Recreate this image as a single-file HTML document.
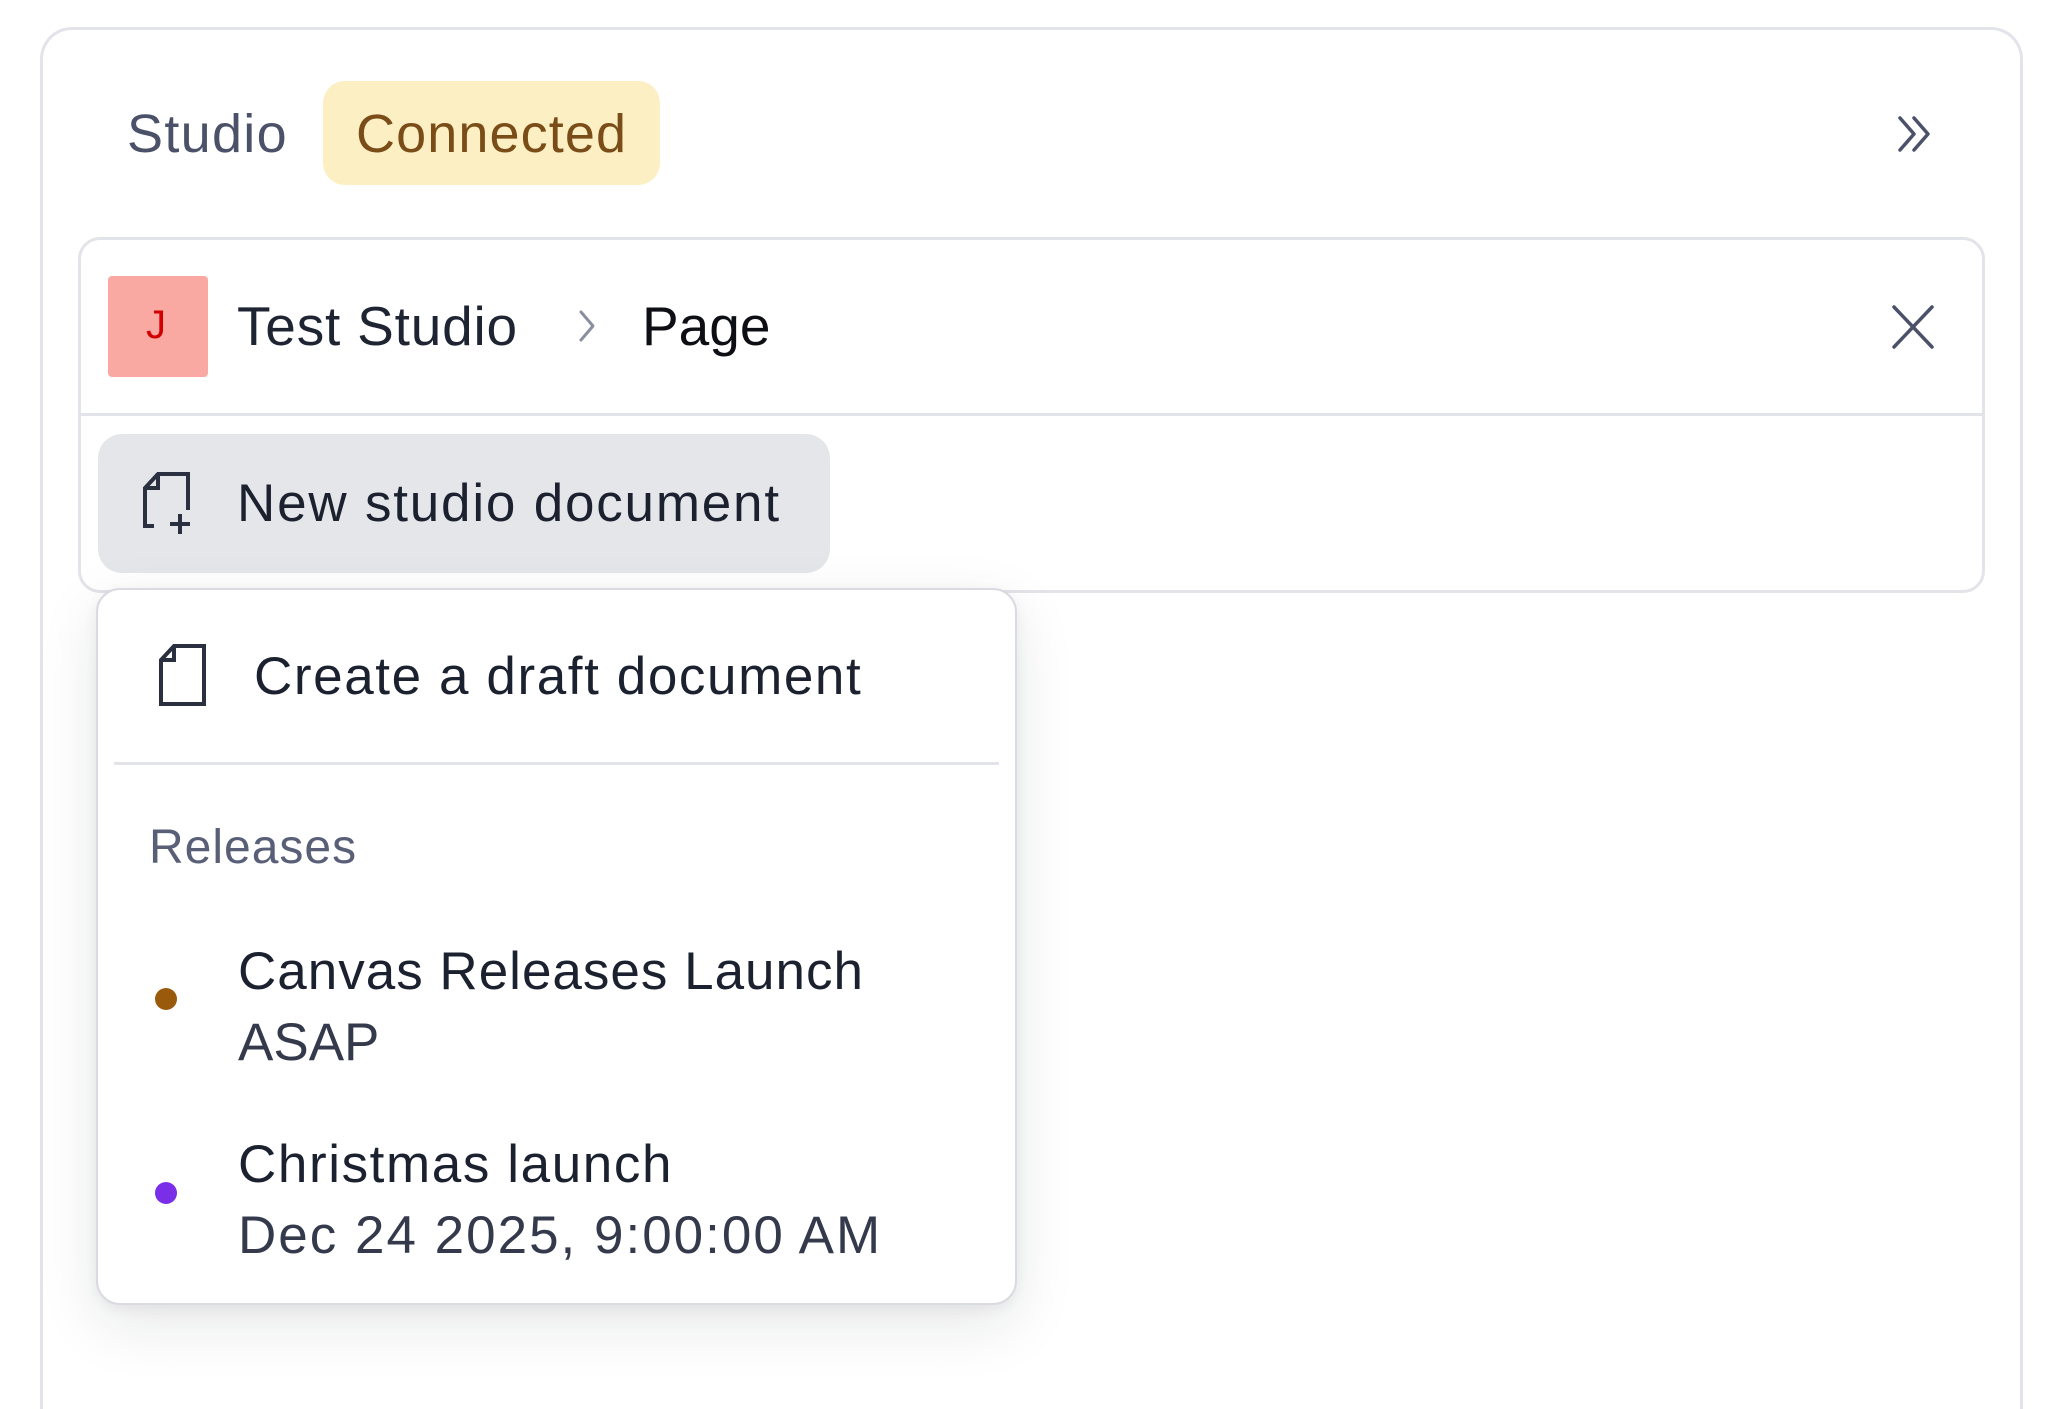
<!DOCTYPE html>
<html><head><meta charset="utf-8">
<style>
html,body{margin:0;padding:0;background:#fff;width:2048px;height:1409px;overflow:hidden;font-family:"Liberation Sans",sans-serif;}
.abs{position:absolute;white-space:nowrap;line-height:1;}
.panel{position:absolute;left:40px;top:27px;width:1983px;height:1382px;border:3px solid #e3e4e9;border-bottom:0;border-radius:32px 32px 0 0;box-sizing:border-box;}
.badge{position:absolute;left:323px;top:81px;width:337px;height:104px;background:#fcefc3;border-radius:22px;}
.card{position:absolute;left:78px;top:237px;width:1907px;height:356px;border:3px solid #e3e4e9;border-radius:22px;box-sizing:border-box;background:#fff;}
.divider{position:absolute;left:80px;top:413px;width:1903px;height:3px;background:#e3e4e9;}
.avatar{position:absolute;left:108px;top:276px;width:100px;height:101px;background:#faa9a2;border-radius:4px;}
.btn{position:absolute;left:98px;top:434px;width:732px;height:139px;background:#e5e6ea;border-radius:24px;}
.menu{position:absolute;left:96px;top:588px;width:921px;height:717px;background:#fff;border:2px solid #d9dbe1;border-radius:24px;box-sizing:border-box;box-shadow:0 20px 60px rgba(20,25,40,0.10),0 4px 14px rgba(20,25,40,0.06);}
.mdiv{position:absolute;left:114px;top:762px;width:885px;height:3px;background:#e3e4e9;}
.dot{position:absolute;width:22px;height:22px;border-radius:50%;}
</style></head><body>
<div class="panel"></div>
<div class="abs" style="left:127px;top:107px;font-size:54px;color:#4b5169;letter-spacing:1.3px;">Studio</div>
<div class="badge"></div>
<div class="abs" style="left:356px;top:107px;font-size:54px;color:#7a4c17;letter-spacing:1.1px;">Connected</div>
<svg class="abs" style="left:1890px;top:110px" width="50" height="48" viewBox="0 0 50 48"><path d="M10 8 L24 24 L10 40 M24 8 L38 24 L24 40" fill="none" stroke="#4b5169" stroke-width="3.5" stroke-linecap="round" stroke-linejoin="round"/></svg>

<div class="card"></div>
<div class="divider"></div>
<div class="avatar"></div>
<div class="abs" style="left:146px;top:305px;font-size:40px;color:#d00000;">J</div>
<div class="abs" style="left:237px;top:299px;font-size:55px;color:#1f2433;letter-spacing:0.8px;">Test Studio</div>
<svg class="abs" style="left:572px;top:304px" width="30" height="44" viewBox="0 0 30 44"><path d="M9 8 L21 22 L9 36" fill="none" stroke="#8a8fa0" stroke-width="3" stroke-linecap="round" stroke-linejoin="round"/></svg>
<div class="abs" style="left:642px;top:299px;font-size:55px;color:#0d0f14;">Page</div>
<svg class="abs" style="left:1888px;top:301px" width="50" height="52" viewBox="0 0 50 52"><path d="M6 6 L44 46 M44 6 L6 46" fill="none" stroke="#4b5169" stroke-width="3.5" stroke-linecap="round"/></svg>

<div class="btn"></div>
<svg class="abs" style="left:140px;top:468px" width="58" height="68" viewBox="0 0 58 68"><path d="M14 58 L5 58 L5 20 L18 6 L48 6 L48 42 M5 20 L18 20 L18 6 M40 46 L40 66 M30 56 L50 56" fill="none" stroke="#2a3040" stroke-width="4" stroke-linejoin="miter"/></svg>
<div class="abs" style="left:237px;top:477px;font-size:53px;color:#1c2130;letter-spacing:1.8px;">New studio document</div>

<div class="menu"></div>
<svg class="abs" style="left:156px;top:640px" width="54" height="70" viewBox="0 0 54 70"><path d="M5 64 L5 20 L18 6 L48 6 L48 64 Z M5 20 L18 20 L18 6" fill="none" stroke="#2a3040" stroke-width="4" stroke-linejoin="miter"/></svg>
<div class="abs" style="left:254px;top:650px;font-size:53px;color:#1c2130;letter-spacing:1.6px;">Create a draft document</div>
<div class="mdiv"></div>
<div class="abs" style="left:149px;top:824px;font-size:48px;color:#585f76;letter-spacing:1px;">Releases</div>
<div class="dot" style="left:155px;top:988px;background:#9a5a0c;"></div>
<div class="abs" style="left:238px;top:945px;font-size:53px;color:#1c2130;letter-spacing:1px;">Canvas Releases Launch</div>
<div class="abs" style="left:238px;top:1016px;font-size:53px;color:#343a4c;">ASAP</div>
<div class="dot" style="left:155px;top:1182px;background:#7b2ee8;"></div>
<div class="abs" style="left:238px;top:1138px;font-size:53px;color:#1c2130;letter-spacing:1.6px;">Christmas launch</div>
<div class="abs" style="left:238px;top:1209px;font-size:53px;color:#343a4c;letter-spacing:2px;">Dec 24 2025, 9:00:00 AM</div>
</body></html>
